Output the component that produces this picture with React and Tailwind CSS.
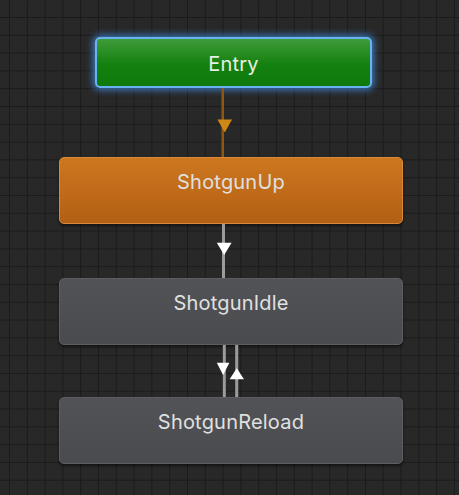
// Animator state graph
const font = { fontFamily: "Inter, 'Noto Sans', sans-serif" };

function Connector({ height, children }) {
    return (
        <svg width="459" height={height} className="block">
            {children}
        </svg>
    );
}

function StateNode({ label, className }) {
    return (
        <div
            className={`ml-[59px] w-[344px] h-[67px] rounded-[5px] flex justify-center pt-[11px] text-[20px] leading-[26px] tracking-[0.2px] text-[#e0e0e0] ${className}`}
        >
            {label}
        </div>
    );
}

export default function App() {
    return (
        <div
            style={font}
            className="w-[459px] h-[495px] overflow-hidden bg-[#282828] bg-[linear-gradient(to_right,#1b1b1b_1px,transparent_1px),linear-gradient(to_bottom,#1b1b1b_1px,transparent_1px)] bg-[size:17.8px_17.8px] bg-[position:9px_17px] pt-[37px]"
        >
            {/* Entry */}
            <div className="ml-[95px] w-[277px] h-[51px] rounded-[5px] border-2 border-[#69b3f2] shadow-[0_0_7px_2px_rgba(70,150,240,0.75)] bg-[linear-gradient(to_bottom,#3f9b3a,#14800f_55%,#0e7a0c)] flex items-center justify-center pt-[2px] text-[20px] tracking-[0.2px] text-[#e6f0e4]">
                Entry
            </div>

            <Connector height={69}>
                <rect x="221.5" y="0" width="2.5" height="69" fill="#8f5812" />
                <polygon points="217.5,31.5 232,31.5 224.8,44.5" fill="#d08814" />
            </Connector>

            <StateNode
                label="ShotgunUp"
                className="bg-[linear-gradient(to_bottom,#cd771f,#bd6918_60%,#b35f15)] border border-[#d8893a] shadow-[0_2px_3px_rgba(0,0,0,0.5)]"
            />

            <Connector height={54}>
                <rect x="222" y="0" width="3" height="54" fill="#9c9c9c" />
                <polygon points="216.8,18.8 231.6,18.8 224.2,31" fill="#ffffff" />
            </Connector>

            <StateNode
                label="ShotgunIdle"
                className="bg-[linear-gradient(to_bottom,#525357,#4a4b4f)] border border-[#5d5e62] shadow-[0_2px_3px_rgba(0,0,0,0.5)]"
            />

            <Connector height={52}>
                <rect x="222.8" y="0" width="3" height="52" fill="#9c9c9c" />
                <rect x="235.2" y="0" width="3" height="52" fill="#9c9c9c" />
                <polygon points="216.8,17.8 229.4,17.8 223.1,30" fill="#ffffff" />
                <polygon points="229.6,34.3 244,34.3 236.8,23.3" fill="#ffffff" />
            </Connector>

            <StateNode
                label="ShotgunReload"
                className="bg-[linear-gradient(to_bottom,#525357,#4a4b4f)] border border-[#5d5e62] shadow-[0_2px_3px_rgba(0,0,0,0.5)]"
            />
        </div>
    );
}
